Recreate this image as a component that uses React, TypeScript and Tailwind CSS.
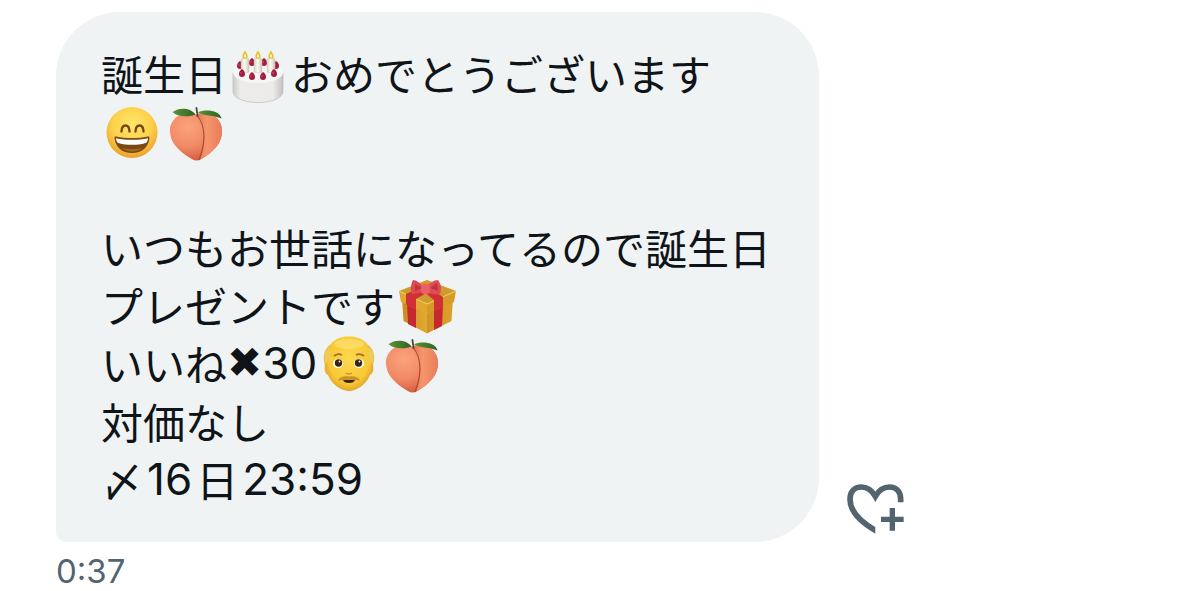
import type { ReactNode } from "react";

const Emoji = ({ label, children }: { label: string; children: ReactNode }) => (
  <svg
    role="img"
    aria-label={label}
    viewBox="0 -2 64 58"
    className="h-[58px] w-16 shrink-0 overflow-visible"
  >
    {children}
  </svg>
);

const Gradients = () => (
  <svg aria-hidden="true" className="absolute size-0">
    <defs>
      <radialGradient id="face" cx="0.5" cy="0.35" r="0.65">
        <stop offset="0" stopColor="#ffe86c" />
        <stop offset="0.6" stopColor="#fdd04a" />
        <stop offset="1" stopColor="#eca02c" />
      </radialGradient>
      <radialGradient id="skin" cx="0.5" cy="0.4" r="0.65">
        <stop offset="0" stopColor="#fdd84e" />
        <stop offset="0.7" stopColor="#f8c936" />
        <stop offset="1" stopColor="#dc9a25" />
      </radialGradient>
      <radialGradient id="peachBody" cx="0.35" cy="0.3" r="0.75">
        <stop offset="0" stopColor="#fba37b" />
        <stop offset="0.55" stopColor="#f08a65" />
        <stop offset="1" stopColor="#d2583f" />
      </radialGradient>
      <linearGradient id="peachSide" x1="0" x2="1">
        <stop offset="0" stopColor="#e27450" />
        <stop offset="0.4" stopColor="#f6966e" />
        <stop offset="1" stopColor="#ea7c58" />
      </linearGradient>
      <linearGradient id="leaf" x1="0" x2="1">
        <stop offset="0" stopColor="#5b9333" />
        <stop offset="1" stopColor="#2f6323" />
      </linearGradient>
      <linearGradient id="cakeSide" x1="0" x2="1">
        <stop offset="0" stopColor="#cfcbcb" />
        <stop offset="0.15" stopColor="#eeebeb" />
        <stop offset="0.8" stopColor="#edeaea" />
        <stop offset="1" stopColor="#c4c0c0" />
      </linearGradient>
      <linearGradient id="candle" x1="0" x2="1">
        <stop offset="0" stopColor="#d5d2c4" />
        <stop offset="0.45" stopColor="#fbfaf2" />
        <stop offset="1" stopColor="#cbc8ba" />
      </linearGradient>
      <linearGradient id="boxLeft" x1="0" x2="1">
        <stop offset="0" stopColor="#c98c20" />
        <stop offset="1" stopColor="#e3aa32" />
      </linearGradient>
      <linearGradient id="boxRight" x1="0" x2="1">
        <stop offset="0" stopColor="#cf9425" />
        <stop offset="1" stopColor="#dda02c" />
      </linearGradient>
    </defs>
  </svg>
);

const CANDLES = [18, 31, 44];
const BACK_BERRIES = [[13, 19], [25, 16], [37, 16], [49, 19]];
const FRONT_BERRIES = [[15, 27], [25, 30], [36, 30], [47, 27]];

const Berry = ({ x, y }: { x: number; y: number }) => (
  <>
    <path d={`M${x} ${y - 4}c2 1 3 3 3 5a3 3 0 0 1-6 0c0-2 1-4 3-5z`} fill="#a41d3f" />
    <circle cx={x - 1} cy={y} r="0.8" fill="#cf5270" />
  </>
);

const Cake = () => (
  <Emoji label="誕生日ケーキ">
    <path d="M6 27v18c0 7 11 11.5 25 11.5S56 52 56 45V27z" fill="url(#cakeSide)" stroke="#b5b2b2" strokeWidth="0.6" />
    <ellipse cx="31" cy="26.5" rx="25" ry="10.5" fill="#f8f7f7" />
    {BACK_BERRIES.map(([x, y]) => (
      <Berry key={x} x={x} y={y} />
    ))}
    {CANDLES.map((x) => (
      <g key={x}>
        <path d={`M${x - 4} 13q4-2 8 0v13q-4 2-8 0z`} fill="url(#candle)" stroke="#c2bfb3" strokeWidth="0.4" />
        <path d={`M${x} 4.5c1.5 2.5 2.6 4 2.6 5.700a2.600 2.600 0 0 1-5.200 0c0-1.700 1.100-3.200 2.600-5.700z`} fill="#e6bd28" />
        <path d={`M${x} 7.5c.8 1.2 1.2 2 1.2 3a1.2 1.2 0 0 1-2.4 0c0-1 .4-1.8 1.2-3z`} fill="#fff3a0" />
      </g>
    ))}
    {FRONT_BERRIES.map(([x, y]) => (
      <Berry key={x} x={x} y={y} />
    ))}
  </Emoji>
);

const Grin = () => (
  <Emoji label="笑顔">
    <circle cx="31" cy="28.5" r="25.5" fill="url(#face)" />
    <g fill="none" stroke="#764611" strokeWidth="2.3" strokeLinecap="round">
      <path d="M20.5 27.5c.3-8 7.700-8 8 0" />
      <path d="M34.5 27.5c.3-8 7.700-8 8 0" />
    </g>
    <path d="M13.5 34c-.1-1.3.8-1.7 2-1.4 9 2 22 2 31 0 1.2-.3 2.1.1 2 1.4C47.5 43 41 49 31 49s-16.500-6-17.500-15z" fill="#7c4813" />
    <path d="M15 34.2c9.5 2 22.5 2 32 0-.3 3-1.2 4.6-3 5.1-7.5 2-18.5 2-26 0-1.8-.5-2.7-2.1-3-5.1z" fill="#fff" />
    <path d="M20 43.5c6 2 16 2 22 0-6 5.5-16 5.5-22 0z" fill="#a1691f" />
  </Emoji>
);

const Peach = () => (
  <Emoji label="桃">
    <path d="M31.5 11C22 5 5 12 5 27c0 11 8 19 17 25 4 2.700 6.500 4.500 9.500 4.500S37 54.500 41 52c9-6 16-14 16-25C57 12 41 5 31.500 11z" fill="url(#peachBody)" />
    <path d="M31.5 11C41 5 57 12 57 27c0 11-7 19-16 25-2 1.300-4 2.700-6 3.600 5-13 8-32-3.500-44.600z" fill="url(#peachSide)" />
    <path d="M31.5 11c11 12 8 31 2.500 45" fill="none" stroke="#a9482f" strokeWidth="1.1" />
    <path d="M30.5 10.5C25 3 14 3.5 7.5 8c5 5 15 5.5 23 2.500z" fill="url(#leaf)" />
    <path d="M33 8.500c7-4 22-2 23.500 6C49 11 41 12.500 33 8.500z" fill="url(#leaf)" />
    <path d="M32.500 12c0-3-1-5.500-1-8" fill="none" stroke="#4d4634" strokeWidth="1.8" strokeLinecap="round" />
  </Emoji>
);

const Gift = () => (
  <Emoji label="プレゼント">
    <path d="M7 20l25 11v24.500L8.500 43z" fill="url(#boxLeft)" />
    <path d="M32 31l26-11-1.500 23L32 55.500z" fill="url(#boxRight)" />
    <path d="M12 26l9 4v20l-8-4z" fill="#c5282f" />
    <path d="M39 31l9-4-1 21-8 4z" fill="#c9272f" />
    <path d="M4 13l28 13v10L6 24z" fill="#e0a62e" />
    <path d="M32 26l29-13-2 11-27 12z" fill="#d89b27" />
    <path d="M4 13L32 2l29 11-29 13z" fill="#cf9b2c" />
    <path d="M4 13l28 13 29-13" fill="none" stroke="#f3cc63" strokeWidth="1" />
    <path d="M11 16l14-6 8 4-12 7v10l-10-4.500z" fill="#cf2f35" />
    <path d="M28 13l6-3 14 9v10l-9 4V22z" fill="#cf2f35" />
    <path d="M28 8c-3-3-7-6-10-6-2 4-3 9-1 14 4 0 8-1 12-3z" fill="#dc4a50" />
    <path d="M32 8c3-3 7-6 11-6 3 4 4 9 2 14-4 1-9 0-13-2z" fill="#e04e53" />
    <path d="M20 6l7 4-7 3zM42 5l-7 5 8 3z" fill="#be3540" />
    <rect x="26" y="6" width="9" height="10" rx="3" fill="#ea6066" />
  </Emoji>
);

const OldMan = () => (
  <Emoji label="おじいさん">
    <path d="M13 9C6 14 6 23 8 29c-1 4 0 9 3 10h42c3-1 4-6 3-10 2-6 2-15-5-20z" fill="#e6b03a" />
    <path d="M32 0.500C19 0.500 10 8 10 20v13c0 12 13 22 22 22s22-10 22-22V20C54 8 45 0.500 32 0.500z" fill="url(#skin)" />
    <path d="M12 11c-6 5-5 11-4 17 4-2 5-6 5-11zM52 11c6 5 5 11 4 17-4-2-5-6-5-11z" fill="#efca55" />
    <ellipse cx="32" cy="8" rx="15" ry="5" fill="#ffe885" opacity="0.5" />
    <path d="M17 20q4-3 8-1M39 19q4-2 8 1" fill="none" stroke="#a96c22" strokeWidth="1.8" />
    <ellipse cx="21" cy="27.5" rx="5" ry="4.5" fill="#fff" />
    <ellipse cx="42" cy="27.5" rx="5" ry="4.5" fill="#fff" />
    <circle cx="21.5" cy="27" r="3.7" fill="#3b2312" />
    <circle cx="41.5" cy="27" r="3.7" fill="#3b2312" />
    <circle cx="22.5" cy="25.5" r="0.9" fill="#fff" />
    <circle cx="42.5" cy="25.5" r="0.9" fill="#fff" />
    <path d="M29 37q3 2 6 0" fill="none" stroke="#cf8c22" strokeWidth="1.5" />
    <path d="M26 44h12q-1 3-6 3t-6-3z" fill="#42220f" />
    <path d="M21 44.500c1-3 6-5 11-4 5-1 10 1 11 4-7-1-15-1-22 0z" fill="#c8912c" />
  </Emoji>
);

const HeartPlus = () => (
  <svg aria-hidden="true" viewBox="51 43 171 150" className="h-[50px] w-[57px]">
    <clipPath id="heartCut">
      <path d="M40 30h190v68h-94v110H40z" />
    </clipPath>
    <path
      d="M150 190C90 158 60 122 60 89c0-23 14-37 34-37 18 0 31 9 42 28 11-19 24-28 42-28 20 0 34 14 34 37v20"
      fill="none"
      stroke="currentColor"
      strokeWidth="17"
      clipPath="url(#heartCut)"
    />
    <path d="M187 115v68M153 149h68" fill="none" stroke="currentColor" strokeWidth="16" />
  </svg>
);

const Line = ({ className = "", children }: { className?: string; children?: ReactNode }) => (
  <p className={`flex h-[58px] items-center whitespace-nowrap ${className}`}>{children}</p>
);

const Latin = ({ children }: { children: ReactNode }) => (
  <span className="font-['Inter','Liberation_Sans',sans-serif] text-[44px]">{children}</span>
);

const App = () => (
  <main lang="ja" className="min-h-screen bg-white pt-3 pl-14 text-[#0f1419]">
    <Gradients />
    <div className="flex items-end">
      <article className="rounded-[64px] rounded-bl-[10px] bg-[#eff3f4] pt-8 pr-12 pb-[34px] pl-[45px] font-['Noto_Sans_CJK_JP',sans-serif] text-[42px] leading-[58px]">
        <Line>
          誕生日
          <Cake />
          おめでとうございます
        </Line>
        <Line>
          <Grin />
          <Peach />
        </Line>
        <Line />
        <Line>いつもお世話になってるので誕生日</Line>
        <Line>
          プレゼントです
          <Gift />
        </Line>
        <Line>
          いいね
          <span className="font-['DejaVu_Sans',sans-serif] font-bold">✖</span>
          <Latin>30</Latin>
          <OldMan />
          <Peach />
        </Line>
        <Line>対価なし</Line>
        <Line className="gap-1">
          〆
          <Latin>16</Latin>
          日
          <Latin>23:59</Latin>
        </Line>
      </article>
      <button type="button" aria-label="リアクションを追加" className="mb-2 ml-7 text-[#536471]">
        <HeartPlus />
      </button>
    </div>
    <time className="mt-[11px] block font-['Inter','Liberation_Sans',sans-serif] text-[33px] leading-9 text-[#536471]">
      0:37
    </time>
  </main>
);

export default App;
